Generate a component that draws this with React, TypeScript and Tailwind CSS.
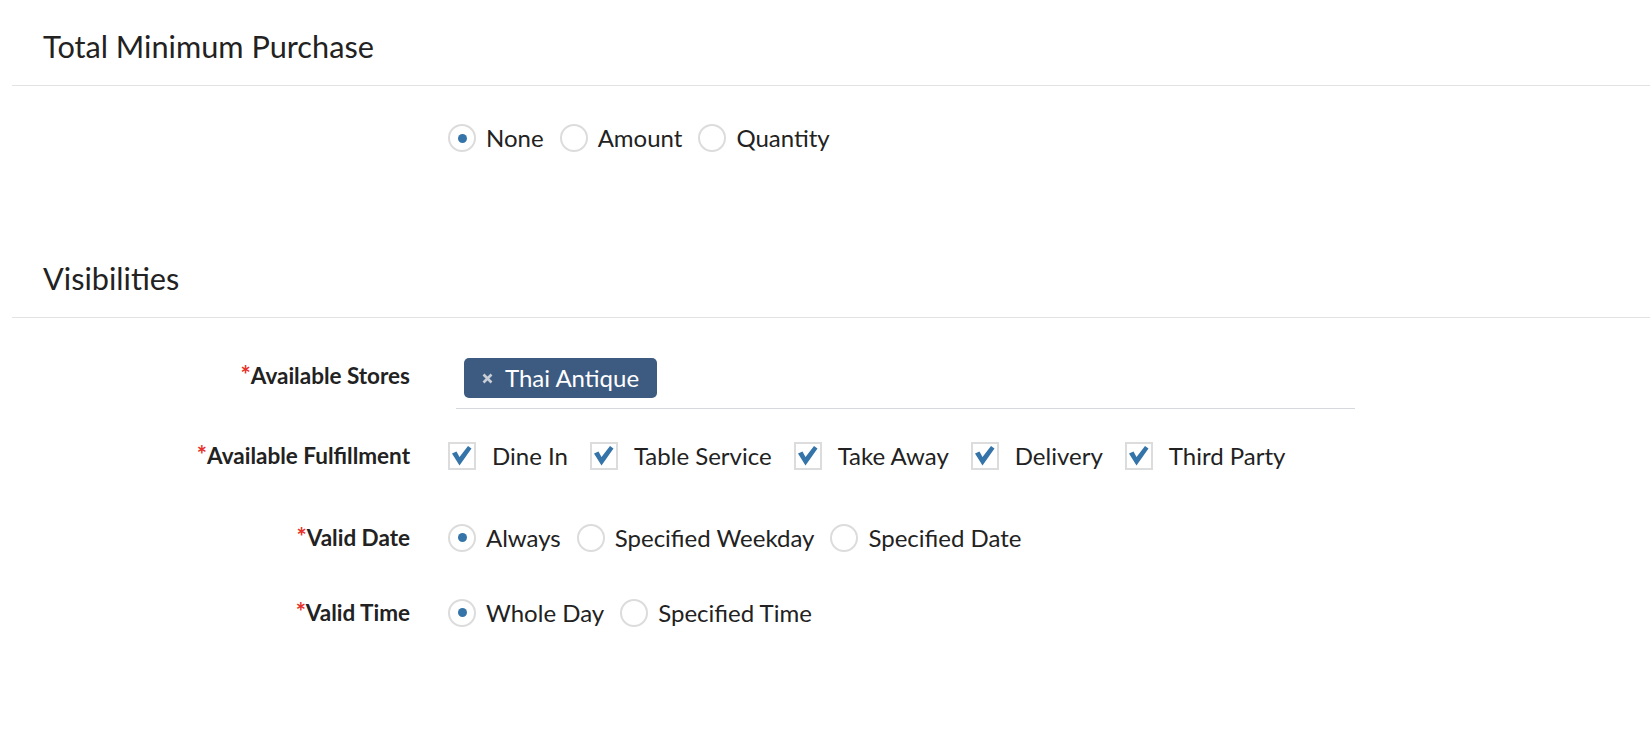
import React from 'react'

const font = { fontFamily: 'Lato, "Liberation Sans", sans-serif' }

function Radio({ label, checked }: { label: string; checked?: boolean }) {
  return (
    <label className="flex items-center mr-[16px] h-[28px]">
      <span className="w-[28px] h-[28px] rounded-full border-2 border-[#dcdcdc] flex items-center justify-center shrink-0">
        {checked && <span className="w-[9px] h-[9px] rounded-full bg-[#3574a9]" />}
      </span>
      <span className="ml-[10px] text-[24px] leading-[28px] text-[#222]">{label}</span>
    </label>
  )
}

function Check({ label }: { label: string }) {
  return (
    <label className="flex items-center mr-[22px] h-[28px]">
      <span className="w-[28px] h-[28px] border-2 border-[#dcdcdc] flex items-center justify-center shrink-0">
        <svg width="24" height="24" viewBox="0 0 24 24">
          <polygon points="2,9.5 6.5,7.5 9.5,13 18,2 21.5,4.5 9.5,21.5" fill="#3574a9" />
        </svg>
      </span>
      <span className="ml-[16px] text-[24px] leading-[28px] text-[#222]">{label}</span>
    </label>
  )
}

function FieldLabel({ children }: { children: React.ReactNode }) {
  return (
    <div className="w-[398px] shrink-0 text-right text-[22.5px] leading-[28px] font-bold text-[#222]">
      <span className="text-[#e8302a] text-[24px]">*</span>
      {children}
    </div>
  )
}

export default function App() {
  return (
    <div className="bg-white min-h-[744px] pl-[12px]" style={font}>
      <h2 className="h-[86px] pt-[29px] pl-[31px] border-b border-[#e2e2e2] text-[30.7px] leading-[36px] text-[#222]">
        Total Minimum Purchase
      </h2>
      <div className="flex items-center mt-[38px] pl-[436px]">
        <Radio label="None" checked />
        <Radio label="Amount" />
        <Radio label="Quantity" />
      </div>

      <h2 className="mt-[80px] h-[86px] pt-[29px] pl-[31px] border-b border-[#e2e2e2] text-[30.7px] leading-[36px] text-[#222]">
        Visibilities
      </h2>

      <div className="flex items-center mt-[32px]">
        <div className="-mt-[8px]">
          <FieldLabel>Available Stores</FieldLabel>
        </div>
        <div className="ml-[46px] w-[899px] pt-[8px] pb-[10px] pl-[8px] border-b border-[#d5d8dc]">
          <span className="inline-flex items-center h-[40px] px-[18px] rounded-[5px] bg-[#3d5a80] text-white text-[24px]">
            <svg width="11" height="11" viewBox="0 0 11 11" className="mr-[12px]">
              <path d="M1.5 1.5 L9.5 9.5 M9.5 1.5 L1.5 9.5" stroke="#c9ced6" strokeWidth="2.6" />
            </svg>
            Thai Antique
          </span>
        </div>
      </div>

      <div className="flex items-center mt-[32px]">
        <FieldLabel>Available Fulfillment</FieldLabel>
        <div className="ml-[38px] flex items-center">
          <Check label="Dine In" />
          <Check label="Table Service" />
          <Check label="Take Away" />
          <Check label="Delivery" />
          <Check label="Third Party" />
        </div>
      </div>

      <div className="flex items-center mt-[53px]">
        <FieldLabel>Valid Date</FieldLabel>
        <div className="ml-[38px] flex items-center">
          <Radio label="Always" checked />
          <Radio label="Specified Weekday" />
          <Radio label="Specified Date" />
        </div>
      </div>

      <div className="flex items-center mt-[46px]">
        <FieldLabel>Valid Time</FieldLabel>
        <div className="ml-[38px] flex items-center">
          <Radio label="Whole Day" checked />
          <Radio label="Specified Time" />
        </div>
      </div>
    </div>
  )
}
